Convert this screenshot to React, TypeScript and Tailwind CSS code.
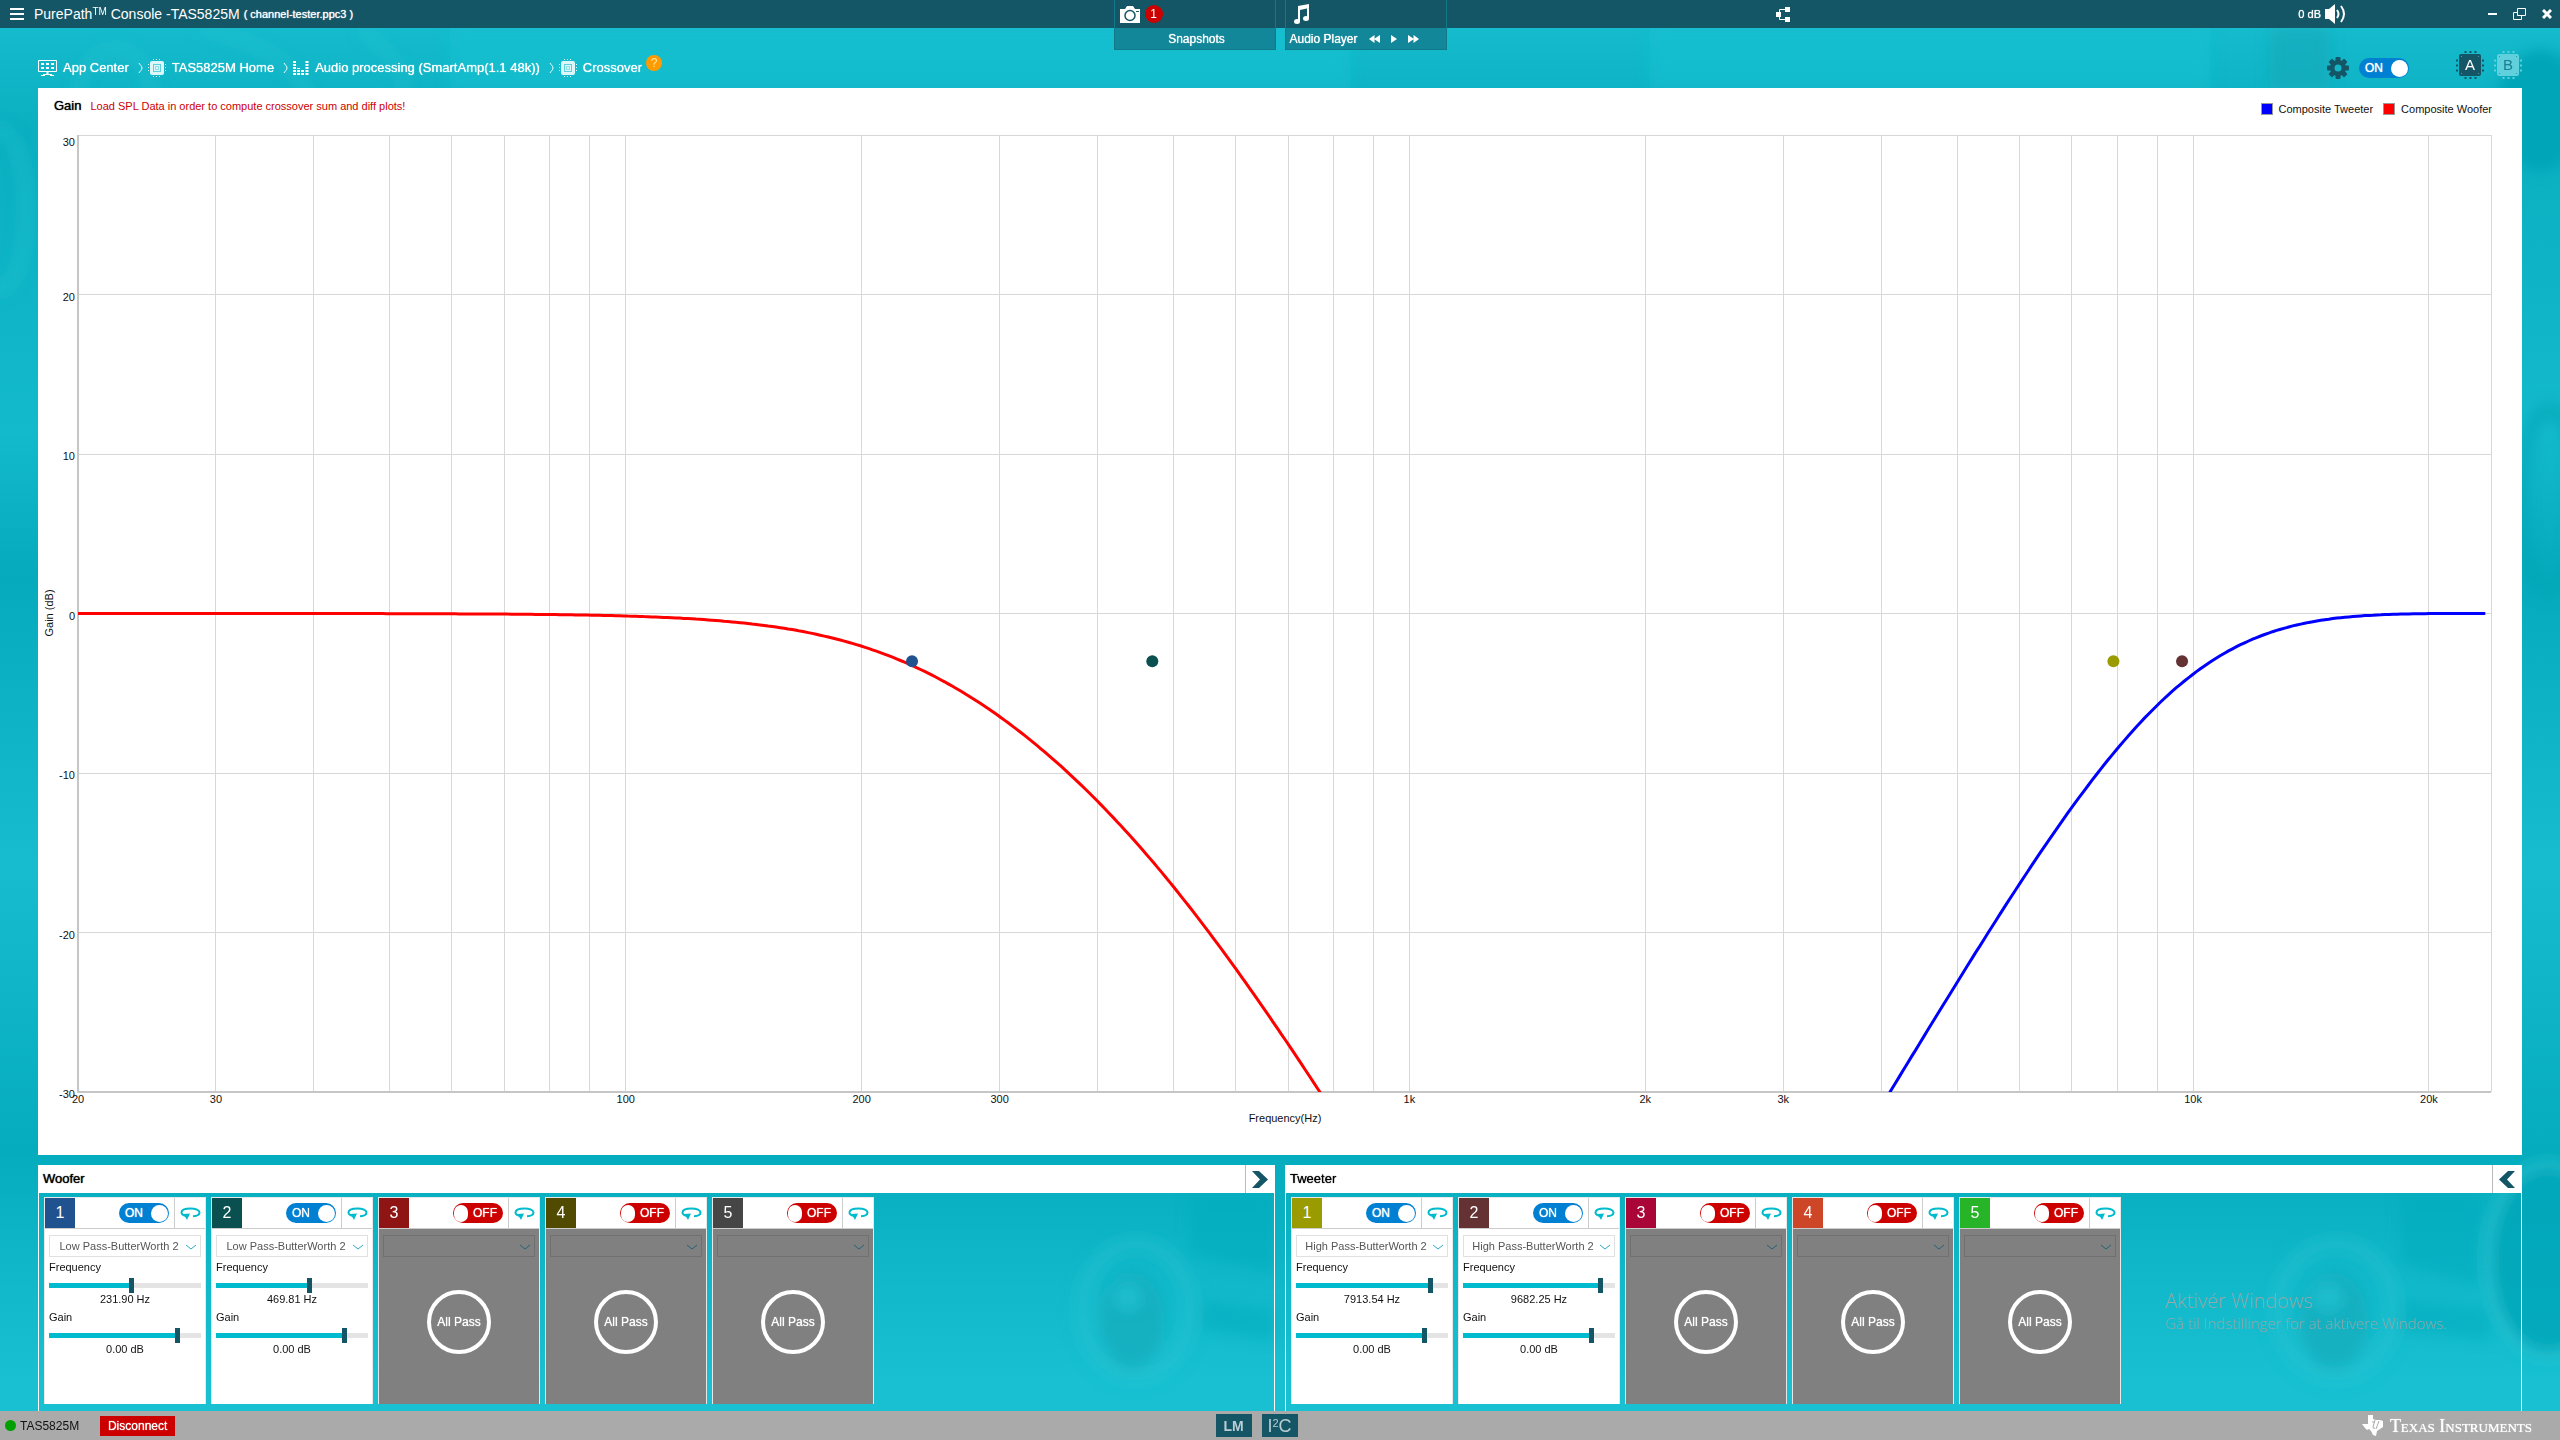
import { useState } from "react";
import type { ReactNode } from "react";
import clsx from "clsx";

type Filter = {
  id: number;
  color: string;
  type?: string;
  freq?: number;
  gain?: number;
};

const WOOFER: Filter[] = [
  { id: 1, color: "bg-[#20528f]", type: "Low Pass-ButterWorth 2", freq: 231.9, gain: 0 },
  { id: 2, color: "bg-[#0a5050]", type: "Low Pass-ButterWorth 2", freq: 469.81, gain: 0 },
  { id: 3, color: "bg-[#8f1414]" },
  { id: 4, color: "bg-[#504b00]" },
  { id: 5, color: "bg-[#464646]" },
];

const TWEETER: Filter[] = [
  { id: 1, color: "bg-[#999b00]", type: "High Pass-ButterWorth 2", freq: 7913.54, gain: 0 },
  { id: 2, color: "bg-[#643232]", type: "High Pass-ButterWorth 2", freq: 9682.25, gain: 0 },
  { id: 3, color: "bg-[#aa0537]" },
  { id: 4, color: "bg-[#cd4628]" },
  { id: 5, color: "bg-[#28b428]" },
];

/* ---------- chart ---------- */

const PLOT = { left: 40, right: 2453, top: 7, bottom: 964 };
const FS = 48000;

const xOf = (f: number) => PLOT.left + (Math.log10(f / 20) / Math.log10(1200)) * (PLOT.right - PLOT.left);
const yOf = (db: number) => PLOT.top + ((30 - db) / 60) * (PLOT.bottom - PLOT.top);
const warp = (f: number) => Math.tan((Math.PI * f) / FS);

const response = (f: number, cutoffs: number[], highPass: boolean) =>
  cutoffs.reduce((sum, fc) => {
    const ratio = highPass ? warp(fc) / warp(f) : warp(f) / warp(fc);
    return sum - 10 * Math.log10(1 + ratio ** 4);
  }, 0);

const curve = (cutoffs: number[], highPass: boolean) => {
  const points: string[] = [];
  for (let i = 0; i <= 600; i++) {
    const f = 20 * Math.pow(23600 / 20, i / 600);
    const db = response(f, cutoffs, highPass);
    if (db > -31) points.push(`${xOf(f).toFixed(1)},${yOf(db).toFixed(1)}`);
  }
  return points.join(" ");
};

const FREQ_LINES = [
  20, 30, 40, 50, 60, 70, 80, 90, 100, 200, 300, 400, 500, 600, 700, 800, 900, 1000, 2000, 3000, 4000, 5000, 6000,
  7000, 8000, 9000, 10000, 20000,
];
const FREQ_LABELS: [number, string][] = [
  [20, "20"],
  [30, "30"],
  [100, "100"],
  [200, "200"],
  [300, "300"],
  [1000, "1k"],
  [2000, "2k"],
  [3000, "3k"],
  [10000, "10k"],
  [20000, "20k"],
];
const HANDLES: [number, string][] = [
  [231.9, "#20528f"],
  [469.81, "#0a5050"],
  [7913.54, "#999b00"],
  [9682.25, "#643232"],
];

const GainChart = () => (
  <svg viewBox="0 0 2484 1027" className="block h-auto w-full text-[11px]" role="img" aria-label="Gain over frequency">
    <defs>
      <clipPath id="plot">
        <rect x={PLOT.left} y={PLOT.top} width={PLOT.right - PLOT.left} height={PLOT.bottom - PLOT.top} />
      </clipPath>
    </defs>
    <g stroke="#d8d8d8" shapeRendering="crispEdges">
      {FREQ_LINES.map((f) => (
        <line key={f} x1={xOf(f)} x2={xOf(f)} y1={PLOT.top} y2={PLOT.bottom} />
      ))}
      {[30, 20, 10, 0, -10, -20, -30].map((db) => (
        <line key={db} x1={PLOT.left} x2={PLOT.right} y1={yOf(db)} y2={yOf(db)} />
      ))}
      <line x1={PLOT.right} x2={PLOT.right} y1={PLOT.top} y2={PLOT.bottom} />
    </g>
    <path
      d={`M${PLOT.left} ${PLOT.top}V${PLOT.bottom}H${PLOT.right}`}
      fill="none"
      stroke="#c6c6c6"
      strokeWidth="2"
      shapeRendering="crispEdges"
    />
    <g clipPath="url(#plot)" fill="none" strokeWidth="3">
      <polyline points={curve([231.9, 469.81], false)} stroke="#f00" />
      <polyline points={curve([7913.54, 9682.25], true)} stroke="#00f" />
    </g>
    {HANDLES.map(([f, fill]) => (
      <circle key={f} cx={xOf(f)} cy={yOf(-3)} r="6" fill={fill} />
    ))}
    <g fill="#111">
      {[30, 20, 10, 0, -10, -20, -30].map((db) => (
        <text key={db} x="37" y={db === 30 ? 18 : yOf(db) + 6} textAnchor="end">
          {db}
        </text>
      ))}
      {FREQ_LABELS.map(([f, label]) => (
        <text key={label} x={xOf(f)} y="975" textAnchor="middle">
          {label}
        </text>
      ))}
      <text x="1247" y="994" textAnchor="middle">
        Frequency(Hz)
      </text>
      <text transform="translate(15 485) rotate(-90)" textAnchor="middle">
        Gain (dB)
      </text>
    </g>
  </svg>
);

/* ---------- icons ---------- */

const MonitorIcon = () => (
  <svg width="19" height="17" viewBox="0 0 19 17" fill="#fff">
    <path d="M.5.5h18v11H.5z" fill="none" stroke="#fff" />
    <path d="M3 3h3v2H3zm5 0h3v2H8zm5 0h3v2h-3zM3 7h3v2H3zm5 0h3v2H8zm5 0h3v2h-3zM8.500 11h2v3h-2zM5 14h9v1H5zM3 15h4v1H3zm9 0h4v1h-4z" />
  </svg>
);

const ChipIcon = () => (
  <svg width="18" height="18" viewBox="0 0 18 18" fill="none" className="text-[#dcf7fa]" stroke="currentColor">
    <path d="M5 .5h8M5 17.500h8M.5 5v8M17.500 5v8" strokeDasharray="1 2" strokeWidth="1" />
    <rect x="2" y="2" width="14" height="14" rx="2" fill="currentColor" stroke="none" />
    <rect x="5.500" y="5.500" width="7" height="7" stroke="#5fd0dc" />
    <rect x="7.500" y="7.500" width="3" height="3" stroke="#8ee0e8" />
  </svg>
);

const BarsIcon = () => (
  <svg width="16" height="14" viewBox="0 0 16 14" stroke="#fff" strokeWidth="3" strokeDasharray="2 1">
    <path d="M1.500 14V0M5.500 14V7M9.500 14V9M14 14V0" />
  </svg>
);

const Separator = () => (
  <svg width="6" height="12" viewBox="0 0 6 12" fill="none" stroke="#fff" className="mr-1 ml-[9px]">
    <path d="M1 1c1 2 3 3 3 5S2 9 1 11" />
  </svg>
);

const SlotChip = ({ letter, active }: { letter: string; active?: boolean }) => (
  <button
    aria-label={`Device ${letter}`}
    className={clsx("relative grid size-7 place-items-center", active ? "text-[#145566]" : "text-[#5fd0dc]")}
  >
    <svg className="absolute inset-0" width="28" height="28" viewBox="0 0 28 28">
      <path
        d="M8.500 1h12M8.500 27h12M1 8.500v12M27 8.500v12"
        stroke="currentColor"
        strokeWidth="2"
        strokeDasharray="2 3"
      />
      <rect x="3" y="3" width="22" height="22" rx="2" fill="currentColor" />
      <path d="M5 5h1v1H5zm17 0h1v1h-1zM5 22h1v1H5zm17 0h1v1h-1z" fill={active ? "#5f93a0" : "#2f97a6"} />
    </svg>
    <span className={clsx("relative text-[15px] leading-4", active ? "text-white" : "text-[#1b7f91]")}>{letter}</span>
  </button>
);

const GearIcon = () => (
  <svg width="22" height="22" viewBox="0 0 22 22" fill="#145566">
    {[0, 45, 90, 135].map((a) => (
      <rect key={a} x="8.500" y="0" width="5" height="22" rx="1" transform={`rotate(${a} 11 11)`} />
    ))}
    <circle cx="11" cy="11" r="8" />
    <circle cx="11" cy="11" r="3.500" fill="#12b6c7" />
  </svg>
);

const ResetIcon = () => (
  <svg width="21" height="13" viewBox="0 0 21 13" fill="none" stroke="#00bbcd" strokeWidth="2">
    <path d="M13 9.200C17 9 19.500 7.600 19.500 5.500S16 1.500 10.500 1.500 1.500 3 1.500 5.500c0 1.600 1.600 2.800 4.500 3.400" />
    <path d="M3.500 7L10 6.500 7 13z" fill="#00bbcd" stroke="none" />
  </svg>
);

const SoundIcon = () => (
  <svg width="21" height="20" viewBox="0 0 21 20">
    <path d="M0 5h4l6-5v20l-6-5H0z" fill="#fff" />
    <path d="M12 6q3 4 0 8M16 2q6 8 0 16" fill="none" stroke="#fff" strokeWidth="2" />
  </svg>
);

const TexasIcon = () => (
  <svg width="22" height="21" viewBox="0 0 22 21">
    <path d="M6 0h5v4l3 1h4l3 1v6l-3 2-3 2-1 5-3-1-2-4-2-2-2 1-2-2-3-4h6z" fill="#fff" />
    <path d="M13 5l-2 7q0 2 2 1M15 1l-1 2M17 6l-3 8M10 7h3" fill="none" stroke="#aaa" />
  </svg>
);

/* ---------- controls ---------- */

// gives small Arial-like text a slightly heavier stem
const HEAVY = "[text-shadow:0_0_1px_currentColor]";

const Toggle = ({ label, initial }: { label: string; initial: boolean }) => {
  const [on, setOn] = useState(initial);
  return (
    <label
      className={clsx(
        "flex h-5 w-[50px] cursor-pointer items-center justify-between rounded-full px-px text-xs leading-4 text-white",
        HEAVY,
        on ? "bg-[#0080d2]" : "flex-row-reverse bg-[#cd0000]",
      )}
    >
      <input
        type="checkbox"
        role="switch"
        aria-label={label}
        className="sr-only"
        checked={on}
        onChange={(e) => setOn(e.target.checked)}
      />
      <span className="px-[5px]">{on ? "ON" : "OFF"}</span>
      <span className="size-[17px] rounded-full bg-white" />
    </label>
  );
};

type SliderProps = { id: string; label: string; min: number; max: number; initial: number; format: (v: number) => string };

const Slider = ({ id, label, min, max, initial, format }: SliderProps) => {
  const [value, setValue] = useState(initial);
  const pct = ((value - min) / (max - min)) * 100;
  return (
    <div className="flex h-[50px] flex-col">
      <label htmlFor={id} className="leading-4">
        {label}
      </label>
      <input
        id={id}
        type="range"
        min={min}
        max={max}
        step="any"
        value={value}
        onChange={(e) => setValue(Number(e.target.value))}
        className="mt-[3px] h-[15px] w-full appearance-none bg-transparent bg-[length:100%_5px] bg-center bg-no-repeat [&::-webkit-slider-thumb]:h-[15px] [&::-webkit-slider-thumb]:w-[5px] [&::-webkit-slider-thumb]:appearance-none [&::-webkit-slider-thumb]:bg-[#145566]"
        style={{ backgroundImage: `linear-gradient(to right, #00bbcd ${pct}%, #e4e4e4 ${pct}%)` }}
      />
      <output htmlFor={id} className="text-center leading-3">
        {format(value)}
      </output>
    </div>
  );
};

const FilterSelect = ({ name, type }: { name: string; type?: string }) => (
  <div className="relative">
    <select
      aria-label={name}
      disabled={!type}
      className={clsx(
        "h-[22px] w-full appearance-none border bg-transparent pr-3 text-[11px] text-[#555] [text-align-last:center]",
        type ? "border-[#e0e0e0]" : "border-[#707070]",
      )}
    >
      <option>{type ?? ""}</option>
    </select>
    <svg
      className="pointer-events-none absolute top-[9px] right-1"
      width="12"
      height="6"
      viewBox="0 0 12 6"
      fill="none"
      stroke={type ? "#2ba9cf" : "#1e6478"}
    >
      <path d="M1 1l5 4 5-4" />
    </svg>
  </div>
);

const FilterCard = ({ group, filter }: { group: string; filter: Filter }) => {
  const { id, color, type, freq, gain } = filter;
  const name = `${group} ${id}`;
  return (
    <div className={clsx("flex w-[162px] flex-col border border-b-0 border-[#e8e8e8]", type ? "bg-white" : "bg-[#808080]")}>
      <div className="flex h-[31px] items-stretch border-b border-[#ccc] bg-white">
        <span className={clsx("grid w-[30px] place-items-center text-base text-white", color)}>{id}</span>
        <div className="ml-auto flex items-center pr-[5px]">
          <Toggle label={name} initial={!!type} />
        </div>
        <button aria-label={`Reset ${name}`} className="grid w-[31px] place-items-center border-l border-[#ccc]">
          <ResetIcon />
        </button>
      </div>
      <div className="flex flex-1 flex-col px-1 pt-1.5 text-[11px] text-[#111]">
        <FilterSelect name={`${name} filter type`} type={type} />
        {type ? (
          <div className="pt-0.5">
            <Slider
              id={`${group}-${id}-freq`}
              label="Frequency"
              min={0}
              max={4.334}
              initial={Math.log10(freq!)}
              format={(v) => `${(10 ** v).toFixed(2)} Hz`}
            />
            <Slider
              id={`${group}-${id}-gain`}
              label="Gain"
              min={-60}
              max={10}
              initial={gain!}
              format={(v) => `${v.toFixed(2)} dB`}
            />
          </div>
        ) : (
          <span
            className={clsx(
              "mx-auto mt-[33px] grid size-16 place-items-center rounded-full border-4 border-white text-xs text-white",
              HEAVY,
            )}
          >
            All Pass
          </span>
        )}
      </div>
    </div>
  );
};

const FilterPanel = ({ title, filters, collapse }: { title: string; filters: Filter[]; collapse: "left" | "right" }) => (
  <section className="flex flex-col border-x border-white">
    <div className="flex h-7 items-stretch bg-white">
      <h2 className={clsx("self-center pl-1 text-[13px] text-black", HEAVY)}>{title}</h2>
      <button aria-label={`Collapse ${title}`} className="ml-auto grid w-[29px] place-items-center border-l border-[#bbb]">
        <svg width="16" height="17" viewBox="0 0 16 17" fill="#145566">
          <path d={collapse === "right" ? "M0 0h7l9 8.500L7 17H0l8-8.500z" : "M16 0H9L0 8.500 9 17h7L8 8.500z"} />
        </svg>
      </button>
    </div>
    <div className="flex flex-1 gap-[5px] px-[5px] pt-1 pb-[7px]">
      {filters.map((f) => (
        <FilterCard key={f.id} group={title} filter={f} />
      ))}
    </div>
  </section>
);

const Crumb = ({ icon, children }: { icon: ReactNode; children: ReactNode }) => (
  <a href="#" className="flex items-center gap-1.5">
    {icon}
    <span>{children}</span>
  </a>
);

/* soft speaker cones behind everything */
const Backdrop = () => (
  <svg className="absolute inset-0 -z-10 h-full w-full" viewBox="0 0 2560 1440" preserveAspectRatio="none" aria-hidden>
    <defs>
      <linearGradient id="strip" x1="0" y1="0" x2="0" y2="1">
        <stop offset="0" stopColor="#18bfd0" />
        <stop offset="0.090" stopColor="#0aafc0" />
        <stop offset="0.300" stopColor="#13bacb" />
        <stop offset="0.400" stopColor="#05abbc" />
        <stop offset="0.600" stopColor="#17bdce" />
        <stop offset="0.800" stopColor="#05acbd" />
        <stop offset="0.880" stopColor="#10b7c8" />
        <stop offset="0.960" stopColor="#18c0d1" />
      </linearGradient>
      <filter id="soft" x="-50%" y="-50%" width="200%" height="200%">
        <feGaussianBlur stdDeviation="7" />
      </filter>
    </defs>
    <rect width="2560" height="1440" fill="url(#strip)" />
    <g filter="url(#soft)" fill="none">
      <ellipse cx="115" cy="90" rx="36" ry="40" stroke="#2cc6d4" strokeWidth="8" opacity="0.500" />
      <path d="M200 28q90 20 110 70M360 28q40 30 45 60" stroke="#2cc6d4" strokeWidth="8" opacity="0.400" />
      <path d="M450 28h900v60H450zM1650 28h560v60h-560z" fill="#1cc3d3" opacity="0.500" />
      <path d="M2270 28h60v60h-60z" fill="#18a6b6" opacity="0.500" />
      <ellipse cx="2540" cy="110" rx="44" ry="60" fill="#04a5b7" />
      <ellipse cx="1136" cy="1310" rx="54" ry="66" stroke="#24c3d2" strokeWidth="18" opacity="0.400" />
      <ellipse cx="1132" cy="1322" rx="32" ry="48" fill="#19a5b5" opacity="0.500" />
      <ellipse cx="1128" cy="1297" rx="14" ry="14" fill="#25c4d4" opacity="0.700" />
      <path d="M1190 1195h85v80l-85-20zM1200 1300l75 10v30l-75-10z" fill="#05abbc" opacity="0.500" />
      <ellipse cx="2336" cy="1310" rx="58" ry="66" stroke="#24c3d2" strokeWidth="18" opacity="0.400" />
      <ellipse cx="2334" cy="1322" rx="34" ry="48" fill="#19a5b5" opacity="0.500" />
      <ellipse cx="2328" cy="1297" rx="16" ry="14" fill="#25c4d4" opacity="0.700" />
      <path d="M2400 1195h80v90l-80-20zM2400 1300l90 10v30l-90-10z" fill="#05abbc" opacity="0.500" />
      <ellipse cx="2548" cy="1260" rx="60" ry="96" fill="#03a6b8" stroke="#2cc8d6" strokeWidth="6" opacity="0.800" />
      <ellipse cx="2550" cy="500" rx="30" ry="90" stroke="#03a3b4" strokeWidth="14" opacity="0.600" />
      <ellipse cx="0" cy="210" rx="26" ry="80" stroke="#2cc6d4" strokeWidth="8" opacity="0.500" />
    </g>
  </svg>
);

const App = () => (
  <div className="relative isolate flex min-h-screen flex-col bg-[#12b9ca] font-['Liberation_Sans',Arial,sans-serif]">
    <Backdrop />
    <header className="relative z-10 grid h-7 grid-cols-[1fr_auto_1fr] grid-rows-[28px] bg-[#145566] text-white">
      <div className="flex items-center pl-[10px]">
        <button aria-label="Menu" className="flex w-[14px] flex-col gap-[3px]">
          <span className="h-0.5 bg-white" />
          <span className="h-0.5 bg-white" />
          <span className="h-0.5 bg-white" />
        </button>
        <h1 className="ml-[10px] text-sm">
          PurePath<sup className="top-[-4px] text-[10px]">TM</sup> Console -TAS5825M
        </h1>
        <span className={clsx("ml-1 text-[11px]", HEAVY)}>( channel-tester.ppc3 )</span>
      </div>
      <div className="flex h-[50px] gap-[9px]">
        <div className="w-[162px] border border-t-0 border-[#11798a]">
          <button aria-label="Take snapshot" className="flex h-7 items-center gap-[5px] pl-[5px]">
            <svg width="20" height="17" viewBox="0 0 20 17">
              <path d="M0 3h5l2-3h6l2 3h5v14H0z" fill="#fff" />
              <circle cx="10" cy="9.500" r="5" fill="none" stroke="#145566" strokeWidth="1.500" />
              <path d="M16 5h3v1h-3z" fill="#145566" />
            </svg>
            <span className="grid size-[18px] place-items-center rounded-full bg-[#cd0000] text-xs">1</span>
          </button>
          <div className={clsx("grid h-[21px] place-items-center bg-[#128799] pl-1 text-xs leading-4", HEAVY)}>
            Snapshots
          </div>
        </div>
        <div className="w-[162px] border border-t-0 border-[#11798a]">
          <div className="flex h-7 items-center pl-2">
            <svg width="15" height="20" viewBox="0 0 15 20" fill="#fff">
              <path d="M4 2l11-2v4L6 6v11H4zM13 2h2v12h-2z" />
              <ellipse cx="3" cy="17.500" rx="3" ry="2.500" />
              <ellipse cx="12" cy="14.500" rx="3" ry="2.500" />
            </svg>
          </div>
          <div className={clsx("flex h-[21px] items-center bg-[#128799] pl-1 text-xs leading-4", HEAVY)}>
            <span>Audio Player</span>
            <div className="flex items-center gap-[11px] pl-[11px]">
              <button aria-label="Previous">
                <svg width="11" height="8" viewBox="0 0 11 8" fill="#fff" className="block">
                  <path d="M5.500 0v8L0 4zM11 0v8L5 4z" />
                </svg>
              </button>
              <button aria-label="Play">
                <svg width="6" height="8" viewBox="0 0 6 8" fill="#fff" className="block">
                  <path d="M0 0v8l6-4z" />
                </svg>
              </button>
              <button aria-label="Next">
                <svg width="11" height="8" viewBox="0 0 11 8" fill="#fff" className="block">
                  <path d="M0 0v8l6-4zM5.500 0v8L11 4z" />
                </svg>
              </button>
            </div>
          </div>
        </div>
      </div>
      <div className="flex items-center pr-2">
        <button aria-label="Signal routing" className="ml-[329px]">
          <svg width="14" height="15" viewBox="0 0 14 15" className="block">
            <path d="M0 5h5v5H0zM9 0h5v5H9zM9 10h5v5H9z" fill="#fff" />
            <path d="M9 2.500H3.500v10H9" fill="none" stroke="#fff" />
          </svg>
        </button>
        <span className={clsx("ml-auto text-[11px]", HEAVY)}>0 dB</span>
        <button aria-label="Volume" className="ml-1">
          <SoundIcon />
        </button>
        <button aria-label="Minimize" className="ml-[142px] h-0.5 w-[9px] bg-white" />
        <button aria-label="Restore" className="ml-4">
          <svg width="13" height="12" viewBox="0 0 13 12" fill="none" stroke="#fff" className="block">
            <path d="M4.500.5h8v7h-8zM4 4.500H.5v7h8V8" />
          </svg>
        </button>
        <button aria-label="Close" className="ml-4">
          <svg width="10" height="10" viewBox="0 0 10 10" stroke="#fff" strokeWidth="3" className="block">
            <path d="M1 1l8 8M9 1L1 9" />
          </svg>
        </button>
      </div>
    </header>

    <div className="flex h-[60px] items-center px-[38px] pt-5">
      <nav className={clsx("flex items-center text-[13px] text-white", HEAVY)}>
        <Crumb icon={<MonitorIcon />}>App Center</Crumb>
        <Separator />
        <Crumb icon={<ChipIcon />}>TAS5825M Home</Crumb>
        <Separator />
        <Crumb icon={<BarsIcon />}>Audio processing (SmartAmp(1.1 48k))</Crumb>
        <Separator />
        <Crumb icon={<ChipIcon />}>Crossover</Crumb>
      </nav>
      <button aria-label="Help" className="mb-[10px] ml-1 grid size-4 place-items-center rounded-full bg-[#ff9b00] text-xs text-[#ffe9a0]">
        ?
      </button>
      <div className="ml-auto flex items-center gap-[10px]">
        <button aria-label="Settings">
          <GearIcon />
        </button>
        <Toggle label="Crossover" initial />
        <div className="mb-1.5 ml-[37px] flex gap-[10px]">
          <SlotChip letter="A" active />
          <SlotChip letter="B" />
        </div>
      </div>
    </div>

    <main className="flex flex-1 flex-col gap-[10px] px-[38px]">
      <section className="bg-white">
        <div className="flex h-10 items-center pr-[30px] pl-4 text-[11px] text-[#111]">
          <h2 className={clsx("mb-1 text-[13px] text-black", HEAVY)}>Gain</h2>
          <p className="mb-1 ml-[9px] text-[#cd0000]">Load SPL Data in order to compute crossover sum and diff plots!</p>
          <ul className="mt-0.5 ml-auto flex gap-[10px]">
            <li className="flex items-center gap-1.5">
              <span className="size-3 border border-[#999] bg-[#00f]" />
              Composite Tweeter
            </li>
            <li className="flex items-center gap-1.5">
              <span className="size-3 border border-[#999] bg-[#f00]" />
              Composite Woofer
            </li>
          </ul>
        </div>
        <GainChart />
      </section>
      <div className="grid flex-1 grid-cols-2 gap-[10px]">
        <FilterPanel title="Woofer" filters={WOOFER} collapse="right" />
        <FilterPanel title="Tweeter" filters={TWEETER} collapse="left" />
      </div>
    </main>

    <div className="pointer-events-none absolute right-[113px] bottom-[107px] font-['Open_Sans','Noto_Sans',sans-serif] font-light text-[#93a9aa]">
      <p className="text-xl leading-6">Aktivér Windows</p>
      <p className="text-[15px] leading-5">Gå til Indstillinger for at aktivere Windows.</p>
    </div>

    <footer className="grid h-[29px] grid-cols-[1fr_auto_1fr] items-center bg-[#aaa]">
      <div className="flex items-center pl-[5px] text-xs text-[#111]">
        <span className="size-[11px] rounded-full bg-[#00a000]" />
        <span className="ml-1">TAS5825M</span>
        <button className={clsx("ml-[21px] h-5 w-[75px] bg-[#cd0000] text-white", HEAVY)}>Disconnect</button>
      </div>
      <div className="flex gap-[10px] pr-[47px] text-[#b9cdd2]">
        <button className="h-[23px] w-9 bg-[#145566] text-sm font-bold">LM</button>
        <button className="h-[23px] w-9 bg-[#145566] text-lg leading-5">
          I<sup className="top-[-5px] text-[11px]">2</sup>C
        </button>
      </div>
      <div className="flex items-center justify-end gap-1.5 pr-7 text-white">
        <TexasIcon />
        <span className="font-['Liberation_Serif',serif] text-lg leading-5 [font-variant:small-caps] [text-shadow:0_0_1px_#fff]">
          Texas Instruments
        </span>
      </div>
    </footer>
  </div>
);

export default App;
